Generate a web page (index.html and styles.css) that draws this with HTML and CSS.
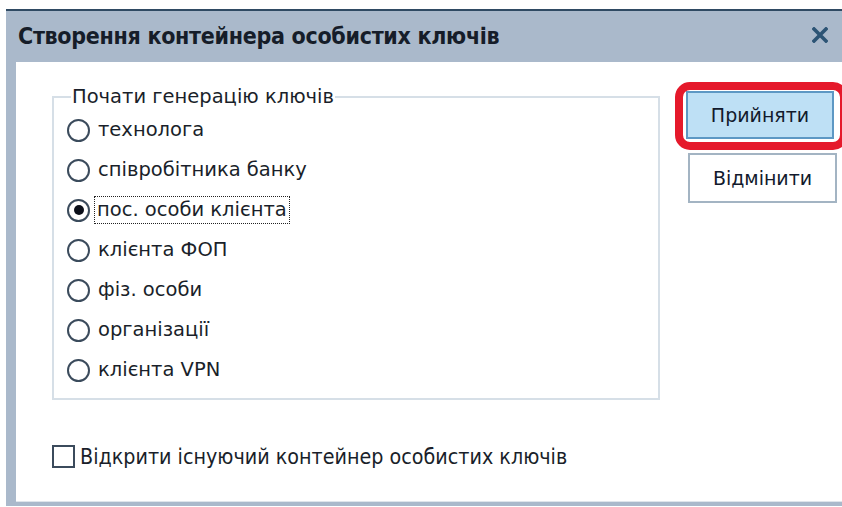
FILE: index.html
```html
<!DOCTYPE html>
<html lang="uk">
<head>
<meta charset="utf-8">
<title>Створення контейнера особистих ключів</title>
<link rel="stylesheet" href="styles.css">
</head>
<body>
<div class="window">
  <div class="titlebar">
    <span class="title">Створення контейнера особистих ключів</span>
    <svg class="close" width="16" height="16" viewBox="0 0 16 16" aria-hidden="true">
      <path d="M2 2 L14 14 M14 2 L2 14" stroke="#2c5475" stroke-width="3.6" stroke-linecap="square"/>
    </svg>
  </div>
  <div class="content">
    <div class="main">
      <fieldset class="group">
        <legend>Почати генерацію ключів</legend>
        <div class="option"><span class="radio"></span><span class="label">технолога</span></div>
        <div class="option"><span class="radio"></span><span class="label">співробітника банку</span></div>
        <div class="option"><span class="radio checked"></span><span class="label focused">пос. особи клієнта</span></div>
        <div class="option"><span class="radio"></span><span class="label">клієнта ФОП</span></div>
        <div class="option"><span class="radio"></span><span class="label">фіз. особи</span></div>
        <div class="option"><span class="radio"></span><span class="label">організації</span></div>
        <div class="option"><span class="radio"></span><span class="label">клієнта VPN</span></div>
      </fieldset>
      <div class="check-row"><span class="checkbox"></span><span class="check-label">Відкрити існуючий контейнер особистих ключів</span></div>
    </div>
    <div class="buttons">
      <div class="btn-wrap">
        <button class="btn primary">Прийняти</button>
        <span class="highlight"></span>
      </div>
      <button class="btn">Відмінити</button>
    </div>
  </div>
</div>
</body>
</html>
```

FILE: styles.css
```css
html, body {
  margin: 0;
  padding: 0;
  background: #ffffff;
  width: 842px;
  height: 507px;
  overflow: hidden;
}

.window {
  margin: 9px 0 0 6px;
  border-top: 2px solid #2f4a63;
  background: #aab9cb;
  padding: 0 0 4px 10px;
}

.titlebar {
  height: 51px;
  display: flex;
  align-items: center;
  justify-content: space-between;
  padding: 0 0 0 2px;
}

.title {
  font-family: "DejaVu Sans Condensed", "DejaVu Sans", sans-serif;
  font-weight: bold;
  font-size: 23px;
  color: #161d29;
  letter-spacing: -0.3px;
  margin-top: -1px;
}

.close {
  margin-right: 14px;
  margin-top: -4px;
}

.content {
  background: #ffffff;
  height: 440px;
  display: flex;
  padding: 24px 0 0 36px;
  box-sizing: border-box;
  border-bottom: 1px solid #dfe5eb;
  font-family: "DejaVu Sans", sans-serif;
  color: #1a1f2a;
}

.main {
  width: 608px;
  display: flex;
  flex-direction: column;
}

.group {
  margin: 0;
  border: 2px solid #d6dfe7;
  padding: 2px 0 6px 13px;
  height: 314px;
  box-sizing: border-box;
}

.group legend {
  font-size: 19.5px;
  line-height: 22px;
  padding: 0 1px;
  margin-left: 4px;
  color: #1a1f2a;
}

.option {
  height: 40px;
  display: flex;
  align-items: center;
}

.radio {
  width: 23px;
  height: 23px;
  box-sizing: border-box;
  border: 2px solid #3b4b5c;
  border-radius: 50%;
  background: #fff;
  flex: none;
  display: flex;
  align-items: center;
  justify-content: center;
}

.radio.checked::after {
  content: "";
  width: 10px;
  height: 10px;
  border-radius: 50%;
  background: #0b0f1a;
}

.label {
  font-size: 19.5px;
  line-height: 24px;
  margin-left: 6px;
  padding: 0 1px;
  border: 1px solid transparent;
}

.label.focused {
  margin-left: 4px;
  padding: 1px 2px;
  border: 1px dotted #222;
}

.check-row {
  display: flex;
  align-items: center;
  margin-top: 44px;
}

.checkbox {
  width: 23px;
  height: 23px;
  box-sizing: border-box;
  border: 2px solid #3b4b5c;
  background: #fff;
  flex: none;
}

.check-label {
  font-family: "DejaVu Sans Condensed", "DejaVu Sans", sans-serif;
  font-size: 21.3px;
  margin-left: 5px;
  color: #1a1f2a;
}

.buttons {
  margin-left: 26px;
  display: flex;
  flex-direction: column;
  gap: 14px;
  padding-top: 5px;
}

.btn-wrap {
  position: relative;
  width: 148px;
  height: 48px;
}

.btn {
  width: 148px;
  height: 48px;
  margin: 0;
  box-sizing: border-box;
  border: 2px solid #a3b4c3;
  background: #ffffff;
  font-family: "DejaVu Sans", sans-serif;
  font-size: 19px;
  color: #121a2c;
  padding: 0;
}

.btn.primary {
  border-color: #5d98c4;
  background: #bee0f5;
}

.btn-wrap + .btn {
  margin-left: 2px;
  width: 149px;
  height: 50px;
}

/* red annotation ring around the confirm button */
.highlight {
  position: absolute;
  left: -11px;
  top: -9px;
  right: -14px;
  bottom: -11px;
  border: 8px solid #e5192b;
  border-radius: 15px;
  pointer-events: none;
}
```
